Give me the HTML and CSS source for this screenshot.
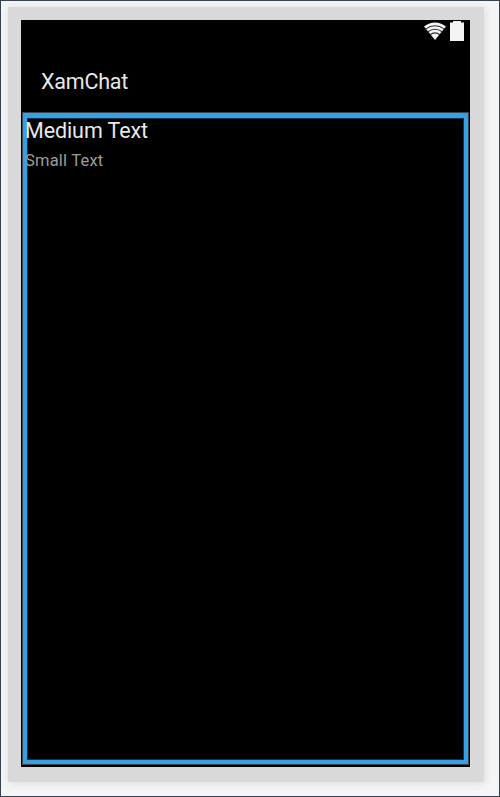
FILE: index.html
```html
<!DOCTYPE html>
<html lang="en">
<head>
<meta charset="utf-8">
<title>XamChat</title>
<link rel="stylesheet" href="styles.css">
</head>
<body>
<main class="canvas">
  <div class="device">
    <div class="screen">
      <div class="status">
        <svg class="wifi" width="24" height="18" viewBox="0 0 24 18">
          <path d="M1 4.5Q12-3.3 23 4.5L12 18Z" fill="#f4f4f4"/>
          <path d="M2.5 7.1Q12 .5 21.5 7.1M4.8 9.8Q12 4.7 19.2 9.8M7 12.7Q12 9 17 12.7" fill="none" stroke="#26323f" stroke-width="1.1"/>
        </svg>
        <svg class="battery" width="14" height="20" viewBox="0 0 14 20">
          <path d="M3 0h8v1.5h3V20H0V1.5h3Z" fill="#f4f4f4"/>
        </svg>
      </div>
      <header class="bar">XamChat</header>
      <section class="layout">
        <div class="medium">Medium Text</div>
        <div class="small">Small Text</div>
      </section>
    </div>
  </div>
</main>
</body>
</html>
```
FILE: styles.css
```css
* { box-sizing: border-box; }
body { margin: 0; font-family: Roboto, sans-serif; }
.canvas {
  width: 500px;
  height: 797px;
  padding: 6px 0 0 7px;
  border: 1px solid #38414f;
  background: #f5f5f6;
  overflow: hidden;
}
.device {
  width: 476px;
  height: 775px;
  padding: 13px;
  background: #d9d9d9;
  box-shadow: 1px 1px 8px #dadada;
}
.screen {
  display: flex;
  flex-direction: column;
  width: 449px;
  height: 747px;
  padding: 0 2px 2px;
  background: #000;
}
.status {
  display: flex;
  justify-content: flex-end;
  gap: 3px;
  height: 42px;
  padding: 1px 4px 0 0;
}
.wifi { margin-top: 1px; }
.bar {
  height: 51px;
  padding-left: 18px;
  font-size: 21.5px;
  line-height: 40px;
  letter-spacing: -.2px;
  color: #e8e8e8;
}
.layout {
  flex: 1;
  margin-bottom: 1px;
  border: 4px solid #35a0e4;
  border-top-width: 5px;
  box-shadow: 0 0 0 1px #39434d, inset 0 0 0 1px #17334a;
  white-space: nowrap;
}
.medium {
  height: 29px;
  margin-left: -2px;
  font-size: 21.5px;
  line-height: 26px;
  letter-spacing: -.1px;
  color: #e8e8e8;
}
.small {
  margin-left: -2px;
  font-size: 16.5px;
  line-height: 27px;
  letter-spacing: .2px;
  color: #999c9e;
}
```
